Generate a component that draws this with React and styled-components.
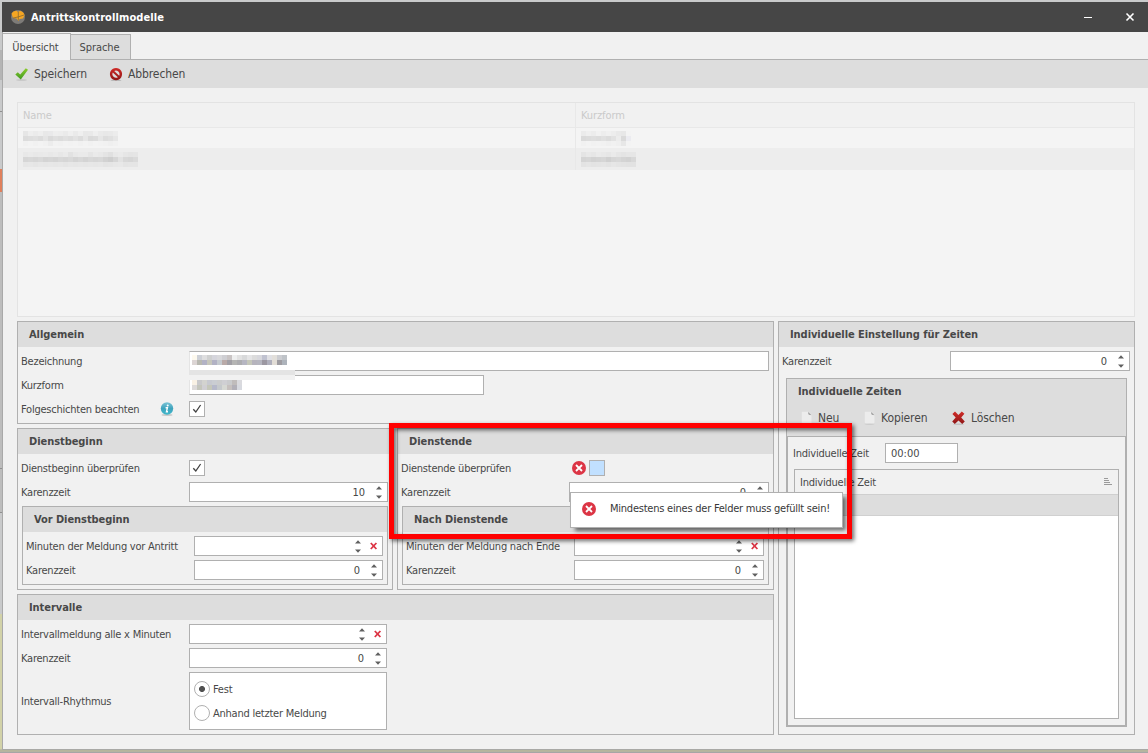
import React from "react";
import styled, { createGlobalStyle } from "styled-components";

const GlobalStyle = createGlobalStyle`
    * {
        box-sizing: border-box;
    }
    body {
        margin: 0;
        overflow: hidden;
        background: #c9cacb;
        font-family: "DejaVu Sans Condensed", "DejaVu Sans", sans-serif;
        font-stretch: condensed;
        font-size: 11px;
        letter-spacing: -0.23px;
        color: #484848;
    }
`;

// pixelated names and short forms, one hex colour per block
const blurName1 = [
    "e6e6e6 eeeeee ebebeb eeeeee e8e8e8 e9e9ea eeeeee ededed eaeaea efefef eaeaea efefef e8e8e8 e9e9e9 efefef eaeaea e8e8e8 e9e9e9 ececec",
    "dcdcdc dedede e0e0e0 dcdcdc e4e4e4 dadada dfdfdf dcdcdc e0e0e0 dddddd e2e2e2 dcdcdc e6e6e6 dadada dcdcdc e6e6e6 dddddd e0e0e0 e6e6e6",
    "f1f1f1 f3f3f3 f1f1f1 f3f3f3 f1f1f1 ececec f2f2f2 f1f1f1 f3f3f3 f2f2f2 f3f3f3 f1f1f1 f3f3f3 f1f1f1 f3f3f3 f2f2f2 f1f1f1 efefef f1f1f1",
];
const blurName2 = [
    "e8e8e8 eaeaea e8e8e8 e9e9e9 eaeaea e8e8e8 eaeaea e7e7e7 eaeaea e2e2e2 e8e8e8 eaeaea eaeaea e5e5e5 eaeaea e8e8e8 e4e4e4 e0e0e0 e8e8e8 eaeaea e6e6e6 e4e4e4 e5e5e5",
    "d6d6d6 d8d8d8 d6d6d6 d9d9d9 d4d4d4 d6d6d6 d4d4d4 d8d8d8 d6d6d6 d9d9d9 d4d4d4 d8d8d8 d4d4d4 d8d8d8 d6d6d6 d8d8d8 d2d2d2 cecece d6d6d6 e2e2e2 d8d8d8 d6d6d6 dadada",
    "e6e6e6 e7e7e7 e5e5e5 e7e7e7 e6e6e6 e7e7e7 e6e6e6 e7e7e7 e5e5e5 e7e7e7 e6e6e6 e7e7e7 e6e6e6 e7e7e7 e6e6e6 e7e7e7 e4e4e4 e5e5e5 e7e7e7 e8e8e8 e4e4e4 e5e5e5 e5e5e5",
];
const blurShort1 = [
    "ebebeb efefef ececec f1f1f1 ededed f0f0f0 ededed e9e9e9 e7e7e7 f3f3f3",
    "dadada dcdcdc dedede dcdcdc e0e0e0 dcdcdc e2e2e2 ececec dadada ebebf0",
    "f1f1f1 f3f3f3 f1f1f1 f2f2f2 f1f1f1 efefef f1f1f1 efefef e7e7e7 f3f3f3",
];
const blurShort2 = [
    "e4e4e4 e8e8e8 e6e6e6 eaeaea e8e8e8 e6e6e6 eaeaea e6e6e6 e4e4e4 e6e6e6 e6e6e6",
    "d4d4d4 d6d6d6 d2d2d2 d4d4d4 d6d6d6 d0d0d0 d6d6d6 d8d8d8 d4d4d4 d2d2d2 d8d8d8",
    "e3e3e3 e5e5e5 e3e3e3 e4e4e4 e5e5e5 e3e3e3 e6e6e6 e4e4e4 e3e3e3 e2e2e2 e2e2e2",
];
const blurField1 = [
    "fdf9ee cdd0d6 dededf cfd0d0 d5d5dc d9d9dc cfcfd3 c9c4c4 eeefef e2e2e2 d8d9da e5e5e6 dcdcdc d8d8dd c0c2d0 e0e0e4 e2dfda cccdd1 bfc3c8",
    "dcd5d4 b8b8b0 b2b2c5 c6c6bb b2b2c4 c5cacf b9aaa8 a19fa5 b5b5b4 adadb0 b6b6c2 c5c7ba b6b4bd b6b6c0 9c98a2 b0b0bd e2ddd6 9e9ca1 adb3bb",
];
const blurField2 = [
    "f9f1e4 c9c9cb d3d3cf c7c9d0 cacdd2 cbcccd cfcfd3 cacbcd c0bcbb dadade",
    "dddad9 c5c6bc d0cfd3 c5c7ba b6b9ca c5c9cc d6d8d3 c6c0be b2b0b8 d7d9df",
];

const Mosaic = ({ rows }) => (
    <MosaicGrid>
        {rows.map((row, r) => (
            <MosaicRow key={r}>
                {row.split(" ").map((c, i) => (
                    <MosaicCell key={i} $c={c} />
                ))}
            </MosaicRow>
        ))}
    </MosaicGrid>
);

const CheckMark = () => (
    <svg width="10" height="10" viewBox="0 0 10 10">
        <path
            d="M1.3 5.2 L3.8 8 L8.6 1"
            fill="none"
            stroke="#404040"
            strokeWidth="1.3"
        />
    </svg>
);

const ErrorIcon = () => (
    <svg width="14" height="14" viewBox="0 0 14 14">
        <circle cx="7" cy="7" r="7" fill="#dc3545" />
        <path
            d="M4 4 L10 10 M10 4 L4 10"
            stroke="#fff"
            strokeWidth="1.8"
            fill="none"
        />
    </svg>
);

const InfoIcon = () => (
    <svg width="14" height="14" viewBox="0 0 14 14">
        <defs>
            <linearGradient id="info" x1="0" y1="0" x2="0" y2="1">
                <stop offset="0" stopColor="#7cc4d6" />
                <stop offset="0.5" stopColor="#3fa3bd" />
                <stop offset="1" stopColor="#3fb8cb" />
            </linearGradient>
        </defs>
        <ellipse cx="7" cy="13" rx="5.5" ry="0.9" fill="#c8c8c8" />
        <circle cx="7" cy="6.5" r="6.2" fill="url(#info)" />
        <circle cx="7.7" cy="3.5" r="1" fill="#fff" />
        <path
            d="M5.6 5.8 H7.4 L6.5 9.7 H8"
            stroke="#fff"
            strokeWidth="1.4"
            fill="none"
        />
    </svg>
);

const SaveIcon = () => (
    <svg width="14" height="13" viewBox="0 0 14 13">
        <defs>
            <linearGradient id="save" x1="0" y1="0" x2="0" y2="1">
                <stop offset="0" stopColor="#8ccb2c" />
                <stop offset="1" stopColor="#3f9a22" />
            </linearGradient>
        </defs>
        <ellipse cx="6.5" cy="12" rx="5.5" ry="0.8" fill="#c2c2c2" />
        <path
            d="M0.3 6.4 L2.8 4.2 L5.2 6.6 L10.8 0.2 L13 1.8 L5.8 11.6 Z"
            fill="url(#save)"
        />
    </svg>
);

const CancelIcon = () => (
    <svg width="14" height="13" viewBox="0 0 14 13">
        <defs>
            <linearGradient id="cancel" x1="0" y1="0" x2="0" y2="1">
                <stop offset="0" stopColor="#cf2a27" />
                <stop offset="1" stopColor="#8f1616" />
            </linearGradient>
        </defs>
        <ellipse cx="7" cy="12.4" rx="5.5" ry="0.6" fill="#b8b8b8" />
        <path
            fill="url(#cancel)"
            fillRule="evenodd"
            d="M7 0 A6.1 6.1 0 1 1 6.99 0 Z M5.2 2.9 L10.2 7.7 A3.7 3.7 0 0 0 5.2 2.9 Z M3.8 4.4 L8.9 9.3 A3.7 3.7 0 0 1 3.8 4.4 Z"
        />
    </svg>
);

const DeleteIcon = () => (
    <svg width="14" height="14" viewBox="0 0 14 14">
        <defs>
            <linearGradient id="del" x1="0" y1="0" x2="0" y2="1">
                <stop offset="0" stopColor="#d02c28" />
                <stop offset="1" stopColor="#8f1717" />
            </linearGradient>
        </defs>
        <ellipse cx="6.5" cy="13.2" rx="5.5" ry="0.7" fill="#c2c2c2" />
        <path
            d="M0.4 3 L3 0.6 L6.4 3.9 L9.8 0.6 L12.4 2.8 L9.2 6.6 L12.8 10.4 L10.2 12.9 L6.5 9.6 L2.8 12.9 L0.2 10.4 L3.7 6.6 Z"
            fill="url(#del)"
        />
    </svg>
);

const PageIcon = () => (
    <svg width="12" height="14" viewBox="0 0 12 14">
        <ellipse cx="5.5" cy="13" rx="5" ry="0.7" fill="#c8c8c8" />
        <path
            d="M1.6 0.7 H6.8 L10.5 4.4 V11.6 Q10.5 12.4 9.7 12.4 H1.6 Q0.8 12.4 0.8 11.6 V1.5 Q0.8 0.7 1.6 0.7 Z"
            fill="#ececec"
        />
        <path d="M7 0.9 L10.4 4.3 L7.6 3.6 Z" fill="#8f8f8f" />
    </svg>
);

const AppIcon = () => (
    <svg width="16" height="16" viewBox="0 0 16 16">
        <circle cx="8" cy="8" r="7" fill="#7d7b78" />
        <path
            d="M1.5 4.5 Q3 1.6 6.5 1.8 L8 3 L10 1.8 Q14 3 14.5 6.5 L13 9.5 L9.5 10 L8.5 12 L6.5 9.5 L3 9 Z"
            fill="#f5a623"
        />
        <path
            d="M8.3 3 V11.5 M3 9 L8 8 L14 6"
            stroke="#8c6a30"
            strokeWidth="0.8"
            fill="none"
        />
    </svg>
);

const SortIcon = () => (
    <svg width="9" height="8" viewBox="0 0 9 8" shapeRendering="crispEdges">
        <path
            d="M0 0.5 H4 M0 2.5 H5 M0 4.5 H6 M0 6.5 H8"
            stroke="#9a9a9a"
            strokeWidth="1"
        />
    </svg>
);

const Arrows = () => (
    <svg width="6" height="13" viewBox="0 0 6 13">
        <path d="M0 3.5 L3 0.3 L6 3.5 Z M0 9.5 L3 12.7 L6 9.5 Z" fill="#606060" />
    </svg>
);

const ClearIcon = () => (
    <svg width="8" height="8" viewBox="0 0 8 8">
        <path
            d="M0.8 1 L6.4 7 M6.4 1 L0.8 7"
            stroke="#dc3545"
            strokeWidth="1.8"
        />
    </svg>
);

const Spin = ({ value, width, clear }) => (
    <Input $w={width}>
        <SpinValue>{value}</SpinValue>
        <SpinButton>
            <Arrows />
        </SpinButton>
        {clear && (
            <SpinButton>
                <ClearIcon />
            </SpinButton>
        )}
    </Input>
);

const Field = ({ label, icon, children }) => (
    <Row>
        <Label>
            {label}
            {icon}
        </Label>
        {children}
    </Row>
);

const Group = ({ title, children }) => (
    <GroupBox>
        <GroupTitle>{title}</GroupTitle>
        <GroupBody>{children}</GroupBody>
    </GroupBox>
);

const App = () => {
    return (
        <Desktop>
            <GlobalStyle />
            <Window>
                <TitleBar>
                    <AppIcon />
                    <Title>Antrittskontrollmodelle</Title>
                    <svg width="55" height="10" viewBox="0 0 55 10">
                        <path d="M0 5.5 H8" stroke="#fff" strokeWidth="1" />
                        <path
                            d="M42.5 1.5 L49.5 8.5 M49.5 1.5 L42.5 8.5"
                            stroke="#fff"
                            strokeWidth="1.6"
                        />
                    </svg>
                </TitleBar>
                <Tabs>
                    <Tab $active>Übersicht</Tab>
                    <Tab>Sprache</Tab>
                </Tabs>
                <Toolbar>
                    <ToolButton $w={94}>
                        <SaveIcon />
                        Speichern
                    </ToolButton>
                    <ToolButton>
                        <CancelIcon />
                        Abbrechen
                    </ToolButton>
                </Toolbar>
                <Content>
                    <ModelTable>
                        <ModelRow $head>
                            <ModelCell $first>Name</ModelCell>
                            <ModelCell>Kurzform</ModelCell>
                        </ModelRow>
                        <ModelRow>
                            <ModelCell $first>
                                <Mosaic rows={blurName1} />
                            </ModelCell>
                            <ModelCell>
                                <Mosaic rows={blurShort1} />
                            </ModelCell>
                        </ModelRow>
                        <ModelRow $selected>
                            <ModelCell $first>
                                <Mosaic rows={blurName2} />
                            </ModelCell>
                            <ModelCell>
                                <Mosaic rows={blurShort2} />
                            </ModelCell>
                        </ModelRow>
                    </ModelTable>
                    <Columns>
                        <Left>
                            <Group title="Allgemein">
                                <Field label="Bezeichnung">
                                    <Input $blurred>
                                        <Mosaic rows={blurField1} />
                                    </Input>
                                </Field>
                                <BlurSmear />
                                <Field label="Kurzform">
                                    <Input $w={295} $blurred $lower>
                                        <Mosaic rows={blurField2} />
                                    </Input>
                                </Field>
                                <Field
                                    label="Folgeschichten beachten"
                                    icon={<InfoIcon />}
                                >
                                    <CheckBox>
                                        <CheckMark />
                                    </CheckBox>
                                </Field>
                            </Group>
                            <Pair>
                                <Group title="Dienstbeginn">
                                    <Field label="Dienstbeginn überprüfen">
                                        <CheckBox>
                                            <CheckMark />
                                        </CheckBox>
                                    </Field>
                                    <Field label="Karenzzeit">
                                        <Spin value="10" />
                                    </Field>
                                    <Group title="Vor Dienstbeginn">
                                        <Field label="Minuten der Meldung vor Antritt">
                                            <Spin clear />
                                        </Field>
                                        <Field label="Karenzzeit">
                                            <Spin value="0" />
                                        </Field>
                                    </Group>
                                </Group>
                                <Group title="Dienstende">
                                    <Field label="Dienstende überprüfen">
                                        <ErrorSlot>
                                            <ErrorIcon />
                                        </ErrorSlot>
                                        <CheckBox $hot />
                                    </Field>
                                    <Field label="Karenzzeit">
                                        <Spin value="0" />
                                    </Field>
                                    <Group title="Nach Dienstende">
                                        <Field label="Minuten der Meldung nach Ende">
                                            <Spin clear />
                                        </Field>
                                        <Field label="Karenzzeit">
                                            <Spin value="0" />
                                        </Field>
                                    </Group>
                                </Group>
                            </Pair>
                            <Group title="Intervalle">
                                <Field label="Intervallmeldung alle x Minuten">
                                    <Spin width={198} clear />
                                </Field>
                                <Field label="Karenzzeit">
                                    <Spin width={198} value="0" />
                                </Field>
                                <Field label="Intervall-Rhythmus">
                                    <RadioBox>
                                        <RadioRow>
                                            <Radio $on />
                                            Fest
                                        </RadioRow>
                                        <RadioRow>
                                            <Radio />
                                            Anhand letzter Meldung
                                        </RadioRow>
                                    </RadioBox>
                                </Field>
                            </Group>
                        </Left>
                        <Right>
                            <GroupTitle>Individuelle Einstellung für Zeiten</GroupTitle>
                            <GroupBody>
                                <Field label="Karenzzeit">
                                    <Spin value="0" />
                                </Field>
                                <TimesGroup>
                                    <GroupTitle>Individuelle Zeiten</GroupTitle>
                                    <TimesToolbar>
                                        <ToolButton $w={63}>
                                            <PageIcon />
                                            Neu
                                        </ToolButton>
                                        <ToolButton $w={88}>
                                            <PageIcon />
                                            Kopieren
                                        </ToolButton>
                                        <ToolButton>
                                            <DeleteIcon />
                                            Löschen
                                        </ToolButton>
                                    </TimesToolbar>
                                    <TimesBody>
                                        <Row>
                                            <TimeLabel>Individuelle Zeit</TimeLabel>
                                            <TimeInput>00:00</TimeInput>
                                        </Row>
                                        <TimeTable>
                                            <TimeHead>
                                                Individuelle Zeit
                                                <SortIcon />
                                            </TimeHead>
                                            <TimeRow />
                                        </TimeTable>
                                    </TimesBody>
                                </TimesGroup>
                            </GroupBody>
                        </Right>
                    </Columns>
                </Content>
            </Window>
            <Tooltip>
                <ErrorIcon />
                <TooltipText>
                    Mindestens eines der Felder muss gefüllt sein!
                </TooltipText>
            </Tooltip>
            <Highlight />
        </Desktop>
    );
};

export default App;

const Desktop = styled.div`
    position: relative;
    width: 1148px;
    height: 753px;
    padding: 2px 0 0 2px;
    background: linear-gradient(
        #c9cacb 0,
        #c9cacb 50px,
        #b4b4b4 50px,
        #b4b4b4 80px,
        #c9cacb 80px,
        #c9cacb 111px,
        #909090 111px,
        #909090 112px,
        #c9cacb 112px,
        #c9cacb 169px,
        #e0805c 169px,
        #e0805c 192px,
        #bdbdbd 192px,
        #bdbdbd 468px,
        #909090 468px,
        #909090 469px,
        #bdbdbd 469px,
        #bdbdbd 512px,
        #909090 512px,
        #909090 513px,
        #c9cacb 513px,
        #c9cacb 614px,
        #d2d2a8 614px,
        #d2d2a8 749px,
        #a8a79c 750px,
        #c3c39c 751px,
        #a6a6a6 752px
    );
`;

const Window = styled.div`
    display: flex;
    flex-direction: column;
    height: 748px;
    background: #f1f1f1;
    border-left: 1px solid #a9a9a9;
    border-bottom: 1px solid #a9a9a6;
`;

const TitleBar = styled.div`
    display: flex;
    align-items: center;
    height: 30px;
    margin-left: -1px;
    padding: 0 9px 0 8px;
    background: #464646;
    color: #fff;
    flex: none;
`;

const Title = styled.div`
    flex: 1;
    padding-left: 5px;
    font-weight: bold;
    letter-spacing: 0.1px;
`;

const Tabs = styled.div`
    display: flex;
    align-items: flex-end;
    height: 28px;
    flex: none;
    border-bottom: 1px solid #b0b0b0;
`;

const Tab = styled.div`
    display: flex;
    align-items: center;
    justify-content: center;
    width: ${(p) => (p.$active ? 68 : 60)}px;
    height: ${(p) => (p.$active ? 27 : 25)}px;
    margin-bottom: ${(p) => (p.$active ? -1 : 0)}px;
    padding-right: 2px;
    border: solid #b0b0b0;
    border-width: 1px 1px 0 0;
    background: ${(p) => (p.$active ? "#f1f1f1" : "#dddddd")};
    letter-spacing: -0.1px;
`;

const Toolbar = styled.div`
    display: flex;
    align-items: center;
    height: 28px;
    flex: none;
    padding-left: 12px;
    background: #ddd;
`;

const ToolButton = styled.div`
    display: flex;
    align-items: center;
    gap: 5px;
    width: ${(p) => (p.$w ? p.$w + "px" : "auto")};
    font-size: 12px;
    letter-spacing: -0.1px;
`;

const Content = styled.div`
    display: flex;
    flex-direction: column;
    gap: 4px;
    padding: 14px 13px 0 14px;
`;

const ModelTable = styled.div`
    height: 215px;
    border: 1px solid #e3e3e3;
    background: #f4f4f4;
    color: #cacaca;
    letter-spacing: -0.1px;
`;

const ModelRow = styled.div`
    display: flex;
    height: ${(p) => (p.$head ? 25 : p.$selected ? 22 : 20)}px;
    background: ${(p) =>
        p.$head ? "#f1f1f1" : p.$selected ? "#ededed" : "#f4f4f4"};
    border-bottom: ${(p) => (p.$head ? "1px solid #e8e8e8" : "none")};
`;

const ModelCell = styled.div`
    display: flex;
    align-items: center;
    width: 558px;
    padding-left: 5px;
    border-right: ${(p) => (p.$first ? "1px solid #e8e8e8" : "none")};
`;

const MosaicGrid = styled.div`
    display: flex;
    flex-direction: column;
`;

const MosaicRow = styled.div`
    display: flex;
    height: 5px;
`;

const MosaicCell = styled.div`
    width: 5px;
    background: #${(p) => p.$c};
`;

const Columns = styled.div`
    display: flex;
    gap: 4px;
    height: 414px;
`;

const Left = styled.div`
    display: flex;
    flex-direction: column;
    gap: 4px;
    width: 757px;
`;

const Pair = styled.div`
    display: grid;
    grid-template-columns: 376px 377px;
    gap: 4px;
`;

const GroupBox = styled.div`
    border: 1px solid #b0b0b0;
`;

const GroupTitle = styled.div`
    height: 25px;
    line-height: 26px;
    padding-left: 11px;
    background: #ddd;
    font-weight: bold;
    letter-spacing: -0.06px;
`;

const GroupBody = styled.div`
    display: flex;
    flex-direction: column;
    gap: 4px;
    padding: 4px;
`;

const Row = styled.div`
    display: flex;
    align-items: center;
    min-height: 20px;
`;

const Label = styled.div`
    display: flex;
    align-items: center;
    justify-content: space-between;
    width: 168px;
    flex: none;
    margin-left: -1px;
    padding-right: 15px;
    white-space: nowrap;
`;

const Input = styled.div`
    display: flex;
    align-items: center;
    height: 20px;
    width: ${(p) => (p.$w ? p.$w + "px" : "auto")};
    flex: ${(p) => (p.$w ? "none" : 1)};
    padding: ${(p) => (p.$lower ? "0 0 0 2px" : p.$blurred ? "0 0 2px 2px" : 0)};
    border: 1px solid #b0b0b0;
    border-left-color: ${(p) => (p.$blurred ? "#e4e4e4" : "#b0b0b0")};
    background: #fff;
    letter-spacing: 0;
`;

// leftover strip of the pixelated area between both text fields
const BlurSmear = styled.div`
    position: relative;
    z-index: 1;
    width: 106px;
    height: 10px;
    margin: -5px 0 -9px 167px;
    background: linear-gradient(#e4e4e4 5px, #f1f1f1 5px);
`;

const SpinValue = styled.div`
    flex: 1;
    padding-right: 6px;
    text-align: right;
`;

const SpinButton = styled.div`
    display: flex;
    align-items: center;
    justify-content: center;
    width: 16px;
    height: 18px;
`;

const CheckBox = styled.div`
    display: flex;
    align-items: center;
    justify-content: center;
    width: 16px;
    height: 16px;
    border: 1px solid #b0b0b0;
    background: ${(p) => (p.$hot ? "#c1e0ff" : "#fff")};
`;

const ErrorSlot = styled.div`
    display: flex;
    width: 20px;
    padding-left: 3px;
`;

const RadioBox = styled.div`
    display: flex;
    flex-direction: column;
    gap: 8px;
    width: 198px;
    height: 58px;
    padding: 8px 4px;
    border: 1px solid #b0b0b0;
    background: #fff;
`;

const RadioRow = styled.div`
    display: flex;
    align-items: center;
    gap: 3px;
    height: 16px;
`;

const Radio = styled.div`
    width: 16px;
    height: 16px;
    border: 1px solid #b0b0b0;
    border-radius: 50%;
    background: ${(p) =>
        p.$on ? "radial-gradient(#505050 2.6px, #fff 3.4px)" : "#fff"};
`;

const Right = styled.div`
    width: 357px;
    border: 1px solid #b0b0b0;
`;

const TimesGroup = styled.div`
    height: 349px;
    margin: 3px 3px 0;
    border: 1px solid #b0b0b0;
    background: #ddd;
`;

const TimesToolbar = styled.div`
    display: flex;
    align-items: center;
    height: 32px;
    padding: 0 0 4px 14px;
`;

const TimesBody = styled.div`
    display: flex;
    flex-direction: column;
    gap: 6px;
    height: 290px;
    padding: 6px;
    border: 1px solid #b0b0b0;
    background: #f1f1f1;
`;

const TimeLabel = styled.div`
    width: 92px;
    margin-left: -1px;
`;

const TimeInput = styled(Input)`
    flex: none;
    width: 73px;
    padding-left: 5px;
`;

const TimeTable = styled.div`
    flex: 1;
    border: 1px solid #b0b0b0;
    background: #fff;
`;

const TimeHead = styled.div`
    display: flex;
    align-items: center;
    justify-content: space-between;
    height: 25px;
    padding: 0 5px;
    background: #f1f1f1;
    border-bottom: 1px solid #cfcfcf;
`;

const TimeRow = styled.div`
    height: 21px;
    background: #ddd;
    border-bottom: 1px solid #d0d0d0;
`;

const Tooltip = styled.div`
    position: absolute;
    left: 570px;
    top: 492px;
    display: flex;
    align-items: center;
    gap: 14px;
    width: 273px;
    height: 36px;
    padding: 0 0 2px 11px;
    border: 1px solid #b0b0b0;
    background: #fff;
    box-shadow: 4px 4px 4px -1px rgba(0, 0, 0, 0.55);
    white-space: nowrap;
`;

const TooltipText = styled.div`
    padding-bottom: 2px;
    color: #383838;
`;

const Highlight = styled.div`
    position: absolute;
    left: 389px;
    top: 423px;
    width: 463px;
    height: 116px;
    border: 5px solid #f00;
    filter: drop-shadow(2px 2px 2px rgba(0, 0, 0, 0.6));
`;
